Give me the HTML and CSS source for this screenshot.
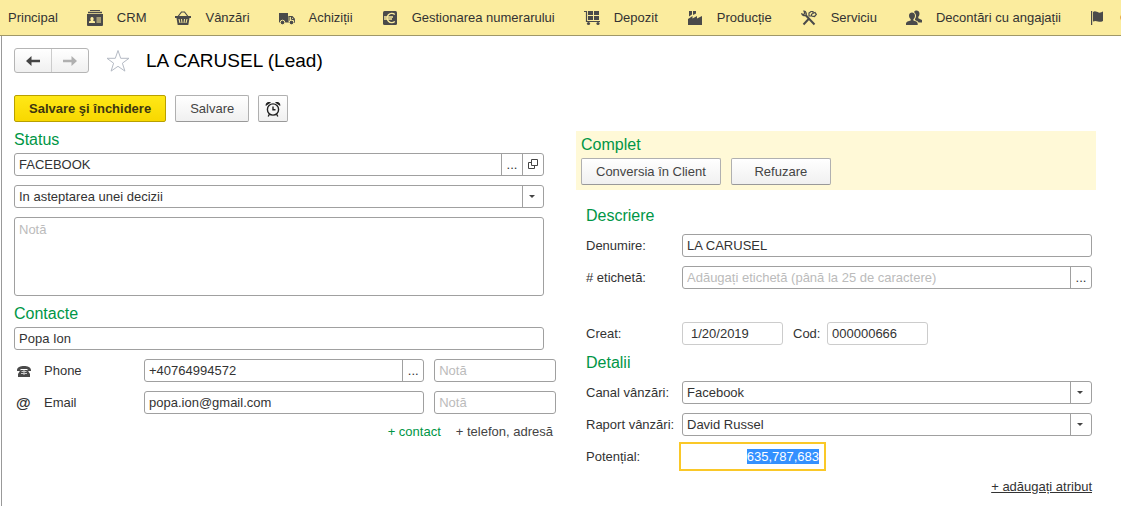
FILE: index.html
```
<!DOCTYPE html>
<html lang="ro">
<head>
<meta charset="UTF-8" />
<meta name="viewport" content="width=device-width, initial-scale=1" />
<title>LA CARUSEL (Lead)</title>
<link rel="stylesheet" href="styles.css">
</head>
<body>

<nav class="sections">
  <a href="#">Principal</a>
  <a href="#">
    <svg class="icon" viewBox="0 0 16 16"><path d="M3 0h10v1H3zM1 1.800h14v1.400H1zM0 4h16V15a1 1 0 0 1-1 1H1a1 1 0 0 1-1-1z"/><path class="cut" d="M5 7a1.700 1.900 0 0 1 1 3.400l2 1.100V13H2v-1.500l2-1.100A1.700 1.900 0 0 1 5 7zM9.500 7.500H14v1H9.500zM9.500 9.500H14v1H9.500zM9.500 11.500H14v1H9.500z"/></svg>
    CRM
  </a>
  <a href="#">
    <svg class="icon" viewBox="0 0 16 16"><path d="M0 6h16v2H0zM1.500 8h13l-1.200 7H2.700z"/><path class="line" d="M3 6.500 6.500 2h3L13 6.500"/><path class="cut-line" d="M4 9l1 4M6.500 9l.5 4M9.500 9L9 13M12 9l-1 4"/></svg>
    Vânzări
  </a>
  <a href="#">
    <svg class="icon" viewBox="0 0 16 16"><path d="M0 3h9v9.500H0z"/><path class="line" d="M10 6.500h3.200L15.300 9v3.500H10z"/><path class="line" d="M12.500 7v2.500H15"/><circle cx="3.500" cy="12.500" r="2.300" class="hub"/><circle cx="12.500" cy="12.500" r="2.300" class="hub"/></svg>
    Achiziții
  </a>
  <a href="#">
    <svg class="icon" viewBox="0 0 16 16"><rect x="1" y="1" width="14" height="14" rx="1.500"/><path class="euro" d="M12.800 4.500A4.600 4.600 0 1 0 12.800 11.500M2 7h9M2 9h8"/></svg>
    Gestionarea numerarului
  </a>
  <a href="#">
    <svg class="icon" viewBox="0 0 16 16"><path d="M4 1h5v4H4zM10 1h5v4h-5zM4 6h5v4H4zM10 6h5v4h-5z"/><path class="line" d="M0 1.500h2.500v10H16"/><circle cx="4.500" cy="13.500" r="1.600"/><circle cx="14" cy="13.500" r="1.600"/></svg>
    Depozit
  </a>
  <a href="#">
    <svg class="icon" viewBox="0 0 16 16"><path d="M1 15V9l4.500-3v2.500L10 6v2.500L15 6v9zM2 1h3v3.500L2 6.500zM6 1h3v2.500L6 5z"/></svg>
    Producție
  </a>
  <a href="#">
    <svg class="icon" viewBox="0 0 16 16"><path class="tool" d="M4.500 5l9 9.500M8.500 8l-6 6.500"/><path class="line" d="M3 1.200A2.500 2.500 0 0 1 4.500 5.500 2.800 2.800 0 0 1 .8 3.800l2 .7 1-1.200z"/><path class="line" d="M8 6V3l2-1.500h2v2l-1.500.8V6zM11.500 3.500l2.500-1 1.300 1.800L13.500 6.500l-2.500-.3"/></svg>
    Serviciu
  </a>
  <a href="#">
    <svg class="icon" viewBox="0 0 16 16"><path d="M8 2C8.500 0 13.500-.5 13.500 3.500c0 1.500-.5 2.500-1.200 3.300v1.400L16 10v2.500h-3.500c-.5-1.500-2.500-2-3.500-2.500V9c1.500-2 1.500-5-1-7z"/><path d="M3 5.500C3 1.500 9 1.500 9 5.500c0 1.700-.7 3-1.600 3.700v1.300c2 .8 4.300 1 4.300 3.200V15H0v-1.300c0-2.200 2.600-2.400 4.700-3.200V9.200C3.800 8.500 3 7.200 3 5.500z"/></svg>
    Decontări cu angajații
  </a>
  <a href="#">
    <svg class="icon" viewBox="0 0 16 16"><path d="M1 1h1.200v14H1zM3 2c2-1.500 4 0 5.500.500S12 2 13 1.500V11c-2 1-3.500 1-5 .5S5 10.500 3 11.500z"/></svg>
    Companie
  </a>
</nav>

<main class="form">
  <header class="title-bar">
    <div class="history">
      <button type="button" aria-label="Înapoi"><svg viewBox="0 0 16 12"><path d="M1 6l5.500-5v3.700H15v2.600H6.500V11z"/></svg></button>
      <button type="button" aria-label="Înainte" disabled><svg viewBox="0 0 16 12"><path d="M15 6L9.500 1v3.700H1v2.600h8.500V11z"/></svg></button>
    </div>
    <svg class="star" viewBox="0 0 24 24"><path d="M12 1.500l2.700 7.800h8.300l-6.600 4.900 2.500 7.900-6.900-4.800-6.900 4.800 2.500-7.900L1 9.300h8.300z"/></svg>
    <h1>LA CARUSEL (Lead)</h1>
  </header>

  <div class="toolbar">
    <button type="button" class="btn primary">Salvare şi închidere</button>
    <button type="button" class="btn">Salvare</button>
    <button type="button" class="btn square" aria-label="Memento">
      <svg viewBox="0 0 16 16"><circle cx="8" cy="8.500" r="5.600"/><path d="M8 5.500v3.200h2.500M4.500 13l-1.300 2.500M11.500 13l1.300 2.500"/><path class="bell" d="M.8 5C0 2 3 0 6 1.500zM15.200 5C16 2 13 0 10 1.500z"/></svg>
    </button>
  </div>

  <div class="columns">
    <section class="left">
      <div class="narrow">
        <h2>Status</h2>
        <div class="field">
          <input type="text" value="FACEBOOK" aria-label="Sursa">
          <button type="button" aria-label="Alege">...</button>
          <button type="button" aria-label="Deschide"><svg class="open" viewBox="0 0 10 10"><path d="M3.500.5h6v6h-6zM3.500 3.500h-3v6h6v-3"/></svg></button>
        </div>
        <div class="field drop">
          <select aria-label="Stare"><option>In asteptarea unei decizii</option></select>
        </div>
        <textarea class="note" placeholder="Notă" aria-label="Notă"></textarea>
        <h2>Contacte</h2>
        <div class="field">
          <input type="text" value="Popa Ion" aria-label="Contact">
        </div>
      </div>

      <div class="contact">
        <svg class="kind" viewBox="0 0 16 14"><path d="M1 6C1 .5 15 .5 15 6v1h-3.500V5h-7v2H1z"/><path d="M4.500 6h7l2.500 4v3H2v-3z"/><path class="keys" d="M5.500 7.500h5M5 9.500h6M8 6v5"/></svg>
        <label for="phone">Phone</label>
        <div class="field">
          <input type="text" id="phone" value="+40764994572">
          <button type="button" aria-label="Alege">...</button>
        </div>
        <div class="field"><input type="text" placeholder="Notă" aria-label="Notă telefon"></div>
      </div>
      <div class="contact">
        <span class="kind at">@</span>
        <label for="email">Email</label>
        <div class="field"><input type="text" id="email" value="popa.ion@gmail.com"></div>
        <div class="field"><input type="text" placeholder="Notă" aria-label="Notă email"></div>
      </div>
      <div class="add-links">
        <a href="#" class="green">+ contact</a>
        <a href="#">+ telefon, adresă</a>
      </div>
    </section>

    <section class="right">
      <div class="complete">
        <h2>Complet</h2>
        <div class="actions">
          <button type="button" class="btn">Conversia în Client</button>
          <button type="button" class="btn">Refuzare</button>
        </div>
      </div>

      <div class="details">
        <h2>Descriere</h2>
        <div class="row">
          <label for="name">Denumire:</label>
          <div class="field"><input type="text" id="name" value="LA CARUSEL"></div>
        </div>
        <div class="row">
          <label for="tag"># etichetă:</label>
          <div class="field">
            <input type="text" id="tag" placeholder="Adăugați etichetă (până la 25 de caractere)">
            <button type="button" aria-label="Alege">...</button>
          </div>
        </div>
        <div class="row created">
          <label for="created">Creat:</label>
          <div class="field readonly date"><input type="text" id="created" value="1/20/2019" readonly></div>
          <label for="code" class="code-label">Cod:</label>
          <div class="field readonly"><input type="text" id="code" value="000000666" readonly></div>
        </div>

        <h2>Detalii</h2>
        <div class="row">
          <label for="channel">Canal vânzări:</label>
          <div class="field drop"><select id="channel"><option>Facebook</option></select></div>
        </div>
        <div class="row">
          <label for="report">Raport vânzări:</label>
          <div class="field drop"><select id="report"><option>David Russel</option></select></div>
        </div>
        <div class="row">
          <label for="potential">Potențial:</label>
          <input type="text" id="potential" class="amount" value="635,787,683">
        </div>
        <div class="attribute"><a href="#">+ adăugați atribut</a></div>
      </div>
    </section>
  </div>
</main>

<script>
  // Campul activ la deschidere
  const potential = document.getElementById("potential");
  potential.focus();
  potential.select();
</script>

</body>
</html>
```
FILE: styles.css
```
* {
  box-sizing: border-box;
}
body {
  margin: 0;
  font-family: "Liberation Sans", Arial, sans-serif;
  font-size: 13px;
  color: #333;
  background: #fff;
  min-height: 100vh;
  display: flex;
  flex-direction: column;
}
button, input, select, textarea {
  font: inherit;
  color: inherit;
}
a {
  color: inherit;
  text-decoration: none;
}
h1, h2 {
  margin: 0;
  font-weight: normal;
}

/* Bara de secțiuni */
.sections {
  display: flex;
  gap: 29px;
  height: 36px;
  padding-left: 8px;
  background: #fbec9e;
  border-bottom: 1px solid #a09868;
  overflow: hidden;
  white-space: nowrap;
}
.sections a {
  display: flex;
  align-items: center;
  gap: 14px;
  flex-shrink: 0;
}
.icon {
  width: 16px;
  height: 16px;
  fill: #4a4a4a;
}
.icon .line, .icon .tool {
  fill: none;
  stroke: #4a4a4a;
  stroke-width: 1.2;
}
.icon .tool {
  stroke-width: 2;
}
.icon .cut {
  fill: #fbec9e;
}
.icon .cut-line, .icon .euro {
  fill: none;
  stroke: #fbec9e;
}
.icon .euro {
  stroke-width: 1.4;
}
.icon .hub {
  stroke: #fbec9e;
}

.form {
  flex: 1;
  padding: 12px 25px 10px 12px;
  border-left: 1px solid #999;
  margin-left: 1px;
}

.title-bar {
  display: flex;
  align-items: center;
  height: 25px;
}
.history {
  display: flex;
  width: 75px;
  height: 25px;
  border: 1px solid #b5b5b5;
  border-radius: 3px;
  background: linear-gradient(#fff, #f0f0f0);
}
.history button {
  flex: 1;
  padding: 0;
  border: none;
  background: none;
  display: flex;
  align-items: center;
  justify-content: center;
}
.history button + button {
  border-left: 1px solid #ccc;
}
.history svg {
  width: 16px;
  height: 12px;
  fill: #444;
}
.history button:disabled svg {
  fill: #b0b0b0;
}
.star {
  width: 24px;
  height: 24px;
  margin: 0 16px 0 17px;
  fill: #fff;
  stroke: #b4bac4;
}
h1 {
  font-size: 19px;
  color: #000;
}

.toolbar {
  display: flex;
  gap: 9px;
  margin-top: 22px;
}
.btn {
  height: 27px;
  padding: 0 14px;
  border: 1px solid #b0b0b0;
  border-bottom-color: #999;
  border-radius: 2px;
  background: linear-gradient(#fff, #f0f0f0);
  color: #444;
}
.btn.primary {
  background: linear-gradient(#ffe817, #f8d800);
  border-color: #b8a000;
  color: #3c3610;
  font-weight: bold;
}
.btn.square {
  width: 30px;
  padding: 0;
  display: flex;
  align-items: center;
  justify-content: center;
}
.btn.square svg {
  width: 16px;
  height: 16px;
  fill: none;
  stroke: #222;
  stroke-width: 1.4;
}
.btn.square .bell {
  fill: #222;
  stroke: none;
}

h2 {
  font-size: 16px;
  line-height: 18px;
  color: #009646;
}
.columns {
  display: grid;
  grid-template-columns: 542fr 520fr;
  gap: 20px;
  margin-top: 9px;
}

/* Câmpuri */
.field {
  display: flex;
  flex: 1;
  min-width: 0;
  height: 23px;
  border: 1px solid #a0a0a0;
  border-radius: 3px;
  background: #fff;
}
.field input, .field select {
  flex: 1;
  width: 0;
  padding: 0 4px;
  border: none;
  outline: none;
  background: none;
}
.field select {
  appearance: none;
}
.field button {
  width: 21px;
  padding: 0;
  border: none;
  border-left: 1px solid #a0a0a0;
  background: none;
}
.open {
  width: 10px;
  height: 10px;
  fill: none;
  stroke: #444;
}
.drop {
  position: relative;
}
.drop::before {
  content: "";
  position: absolute;
  top: 0;
  bottom: 0;
  right: 20px;
  border-left: 1px solid #a0a0a0;
}
.drop::after {
  content: "";
  position: absolute;
  top: 9px;
  right: 8px;
  border: 3px solid transparent;
  border-top-color: #444;
  border-bottom: none;
  pointer-events: none;
}
::placeholder {
  color: #bbb;
  opacity: 1;
}
.readonly {
  border-color: #ccc;
}

.narrow {
  display: flex;
  flex-direction: column;
  margin-right: 12px;
}
.narrow .field {
  flex: none;
}
.narrow h2 {
  margin-bottom: 4px;
}
.field + .field, .field + .note {
  margin-top: 9px;
}
.note {
  height: 79px;
  padding: 4px;
  border: 1px solid #a0a0a0;
  border-radius: 3px;
  resize: none;
}
.note + h2 {
  margin-top: 9px;
}

.contact {
  display: flex;
  align-items: center;
  margin-top: 9px;
}
.contact .kind {
  width: 16px;
  height: 14px;
  margin: 0 12px 0 2px;
  fill: #4a4a4a;
}
.contact .at {
  font-size: 15px;
  font-weight: bold;
  line-height: 14px;
}
.kind .keys {
  stroke: #ccc;
  fill: none;
}
.contact label {
  width: 100px;
}
.contact .field {
  flex: 281;
}
.contact .field + .field {
  flex: 121;
  margin: 0 0 0 10px;
}
.add-links {
  display: flex;
  justify-content: flex-end;
  gap: 15px;
  margin-top: 10px;
  padding-right: 3px;
  color: #444;
}
.add-links .green {
  color: #009646;
}

.complete {
  padding: 5px;
  background: #fff9d7;
}
.actions {
  display: flex;
  gap: 10px;
  margin-top: 4px;
}
.complete .btn {
  min-width: 100px;
}
.details {
  padding: 17px 4px 0 10px;
}
.details h2 {
  margin-bottom: 9px;
}
.row {
  display: flex;
  align-items: center;
  margin-bottom: 9px;
}
.row label {
  width: 96px;
  white-space: nowrap;
}
.row.created {
  margin: 33px 0 9px;
}
.created .field {
  flex: none;
  width: 101px;
  margin: 0;
}
.date input {
  padding-left: 8px;
}
.row .code-label {
  width: 34px;
  margin-left: 10px;
}
.amount {
  width: 147px;
  height: 29px;
  margin: -3px;
  padding: 0 5px;
  border: 2px solid #fac828;
  outline: none;
  text-align: right;
}
.amount::selection {
  background: #3390ff;
  color: #fff;
}
.attribute {
  margin-top: 11px;
  text-align: right;
}
.attribute a {
  text-decoration: underline;
}
```
